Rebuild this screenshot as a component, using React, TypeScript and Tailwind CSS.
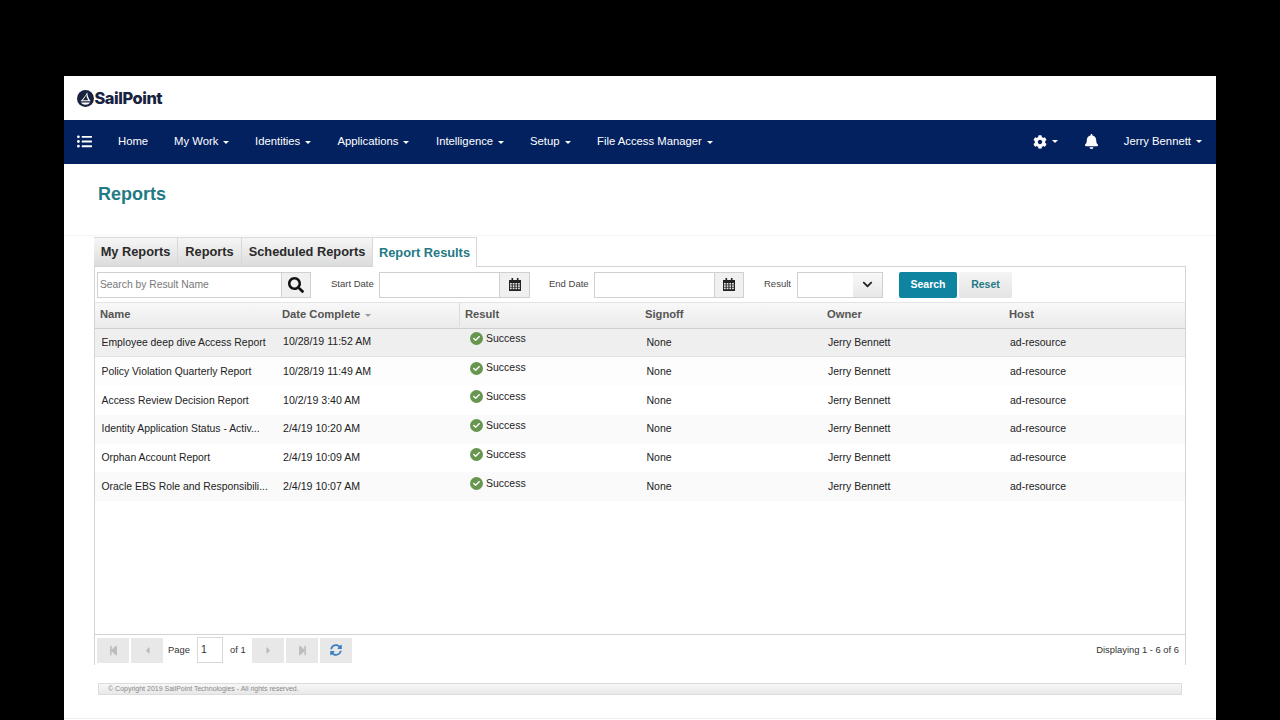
import React from 'react';
import { FaBell, FaCheck, FaChevronDown, FaCog, FaListUl, FaSearch, FaStepBackward, FaStepForward, FaCaretLeft, FaCaretRight, FaSyncAlt } from 'react-icons/fa';

const navItems = [
  { label: 'Home', w: 'w-[56px]', caret: false },
  { label: 'My Work', w: 'w-[81px]', caret: true },
  { label: 'Identities', w: 'w-[82.5px]', caret: true },
  { label: 'Applications', w: 'w-[98.5px]', caret: true },
  { label: 'Intelligence', w: 'w-[94px]', caret: true },
  { label: 'Setup', w: 'w-[67px]', caret: true },
  { label: 'File Access Manager', w: 'w-[130px]', caret: true },
];

const tabs = [
  { label: 'My Reports', w: 'w-[84px]' },
  { label: 'Reports', w: 'w-[64px]' },
  { label: 'Scheduled Reports', w: 'w-[131px]' },
];

const rows = [
  { name: 'Employee deep dive Access Report', date: '10/28/19 11:52 AM' },
  { name: 'Policy Violation Quarterly Report', date: '10/28/19 11:49 AM' },
  { name: 'Access Review Decision Report', date: '10/2/19 3:40 AM' },
  { name: 'Identity Application Status - Activ...', date: '2/4/19 10:20 AM' },
  { name: 'Orphan Account Report', date: '2/4/19 10:09 AM' },
  { name: 'Oracle EBS Role and Responsibili...', date: '2/4/19 10:07 AM' },
];

const Caret = ({ color = 'border-t-white' }: { color?: string }) => (
  <span className={`inline-block align-middle ml-[5px] w-0 h-0 border-x-[3.5px] border-x-transparent border-t-[3.5px] ${color}`} />
);

const PagerButton = ({ children }: { children: React.ReactNode }) => (
  <div className="w-[32px] h-[25px] bg-[#e8e8e8] flex items-center justify-center text-[#bdbdbd] text-[11px]">
    {children}
  </div>
);

const CalendarIcon = () => (
  <svg width="12" height="13" viewBox="0 0 12 13">
    <rect x="0" y="2" width="12" height="11" fill="#222" />
    <rect x="2.5" y="0" width="1.6" height="3" fill="#222" />
    <rect x="7.9" y="0" width="1.6" height="3" fill="#222" />
    {[5, 7.3, 9.6].map((y) =>
      [1, 3.7, 6.4, 9.1].map((x) => (
        <rect key={`${x}-${y}`} x={x} y={y} width="1.7" height="1.6" fill="#e8e8e8" />
      ))
    )}
  </svg>
);

export default function App() {
  return (
    <div className="w-[1280px] h-[720px] bg-black pt-[76px] px-[64px] overflow-hidden font-['Liberation_Sans',Arial,sans-serif]">
      <div className="h-[644px] bg-white flex flex-col">
        <div className="h-[44px] pl-[13px] flex items-center">
          <svg width="17" height="17" viewBox="0 0 17 17" className="mr-[0.5px]">
            <circle cx="8.5" cy="8.5" r="8.5" fill="#17233f" />
            <path d="M10.2 2.2 C10.6 6 11.6 9 13.8 11.2 H3.4 C6 9 8.4 6 10.2 2.2 Z" fill="white" />
            <path d="M9.4 4.6 C9.6 7 10.2 8.9 11.4 10.2 H5.8 C7.2 8.8 8.4 7 9.4 4.6 Z" fill="#17233f" />
            <path d="M4 12.6 H13 C12 14 10.4 14.8 8.5 14.8 C6.6 14.8 5 14 4 12.6 Z" fill="white" />
          </svg>
          <span className="font-['Inter',sans-serif] text-[16.4px] font-extrabold tracking-[-0.45px] text-[#17233f]">SailPoint</span>
        </div>

        <div className="h-[44px] pb-[1px] bg-[#04215f] flex items-center text-white text-[11.3px]">
          <FaListUl className="ml-[13px] mr-[26px] text-[15px]" />
          <div className="flex">
            {navItems.map((item) => (
              <div key={item.label} className={`${item.w} whitespace-nowrap shrink-0`}>
                {item.label}
                {item.caret && <Caret />}
              </div>
            ))}
          </div>
          <div className="ml-auto flex items-center">
            <FaCog className="text-[14px]" />
            <Caret />
            <FaBell className="ml-[26px] text-[15px]" />
            <span className="ml-[25px]">Jerry Bennett</span>
            <Caret />
            <span className="w-[14px]" />
          </div>
        </div>

        <div className="h-[72px] pl-[34px] pt-[19px] border-b border-[#f6f6f6]">
          <h1 className="text-[18px] leading-[22px] font-bold text-[#1f7a85]">Reports</h1>
        </div>

        <div className="ml-[30px] w-[1092px] mt-[1px] flex h-[29px] items-stretch">
          {tabs.map((tab) => (
            <div
              key={tab.label}
              className={`${tab.w} shrink-0 flex items-center justify-center bg-gradient-to-b from-[#f6f6f6] to-[#dcdcdc] border-t border-r border-[#d8d8d8] text-[12.8px] font-bold text-[#2a2a2a] whitespace-nowrap`}
            >
              {tab.label}
            </div>
          ))}
          <div className="w-[104px] shrink-0 flex items-center justify-center bg-white border-t border-r border-[#d8d8d8] text-[12.8px] font-bold text-[#1f7a85] relative z-10 h-[30px] whitespace-nowrap">
            Report Results
          </div>
        </div>

        <div className="ml-[30px] w-[1092px] h-[399px] border-x border-t border-[#d4d4d4] flex flex-col">
          <div className="h-[36px] flex items-center pl-[2px] text-[9.5px] text-[#444] border-b border-[#e4e4e4] shrink-0">
            <div className="w-[185px] h-[26px] border border-[#d0d0d0] flex items-center pl-[2px] text-[#777] text-[10.3px]">
              Search by Result Name
            </div>
            <div className="w-[29px] h-[26px] bg-[#f0f0f0] border-y border-r border-[#d0d0d0] flex items-center justify-center text-[#111] text-[16px]">
              <FaSearch />
            </div>
            <span className="ml-[20px] w-[48px]">Start Date</span>
            <div className="w-[121px] h-[26px] border border-[#d0d0d0]" />
            <div className="w-[30px] h-[26px] bg-[#f0f0f0] border-y border-r border-[#d0d0d0] flex items-center justify-center">
              <CalendarIcon />
            </div>
            <span className="ml-[19px] w-[45px]">End Date</span>
            <div className="w-[121px] h-[26px] border border-[#d0d0d0]" />
            <div className="w-[29px] h-[26px] bg-[#f0f0f0] border-y border-r border-[#d0d0d0] flex items-center justify-center">
              <CalendarIcon />
            </div>
            <span className="ml-[20px] w-[33px]">Result</span>
            <div className="w-[57px] h-[26px] border border-[#d0d0d0]" />
            <div className="w-[30px] h-[26px] bg-gradient-to-b from-[#f8f8f8] to-[#e8e8e8] border-y border-r border-[#d0d0d0] -ml-[1px] flex items-center justify-center text-[#222] text-[11px]">
              <FaChevronDown />
            </div>
            <div className="ml-[16px] w-[58px] h-[26px] rounded-[2px] bg-[#0f84a0] text-white font-bold text-[10.5px] flex items-center justify-center">
              Search
            </div>
            <div className="ml-[2px] w-[53px] h-[26px] rounded-[2px] bg-gradient-to-b from-[#f4f4f4] to-[#e4e4e4] text-[#1f7a85] font-bold text-[10.5px] flex items-center justify-center">
              Reset
            </div>
          </div>

          <div className="h-[26px] pb-[2px] grid grid-cols-[182px_182px_181px_182px_182px_1fr] items-center bg-gradient-to-b from-[#f8f8f8] to-[#ebebeb] border-b border-[#cfcfcf] text-[11.2px] font-bold text-[#555] shrink-0">
            <div className="pl-[5px]">Name</div>
            <div className="pl-[5px]">
              Date Complete
              <Caret color="border-t-[#999]" />
            </div>
            <div className="pl-[5px] h-[23px] flex items-center border-l border-[#dcdcdc]">Result</div>
            <div className="pl-[5px]">Signoff</div>
            <div className="pl-[5px]">Owner</div>
            <div className="pl-[5px]">Host</div>
          </div>

          <div className="flex-1 -mt-[0.5px]">
            {rows.map((row, i) => (
              <div
                key={row.name}
                className={`h-[28.8px] grid grid-cols-[182px_182px_181px_182px_182px_1fr] items-center text-[10.5px] text-[#222] ${
                  i === 0 ? 'bg-[#efefef] border-b border-[#e2e2e2]' : i === 1 ? 'bg-[#fdfdfd]' : i % 2 === 1 ? 'bg-[#fafafa]' : 'bg-white'
                }`}
              >
                <div className="pl-[6.5px] text-[10.4px] whitespace-nowrap overflow-hidden">{row.name}</div>
                <div className="pl-[6px] text-[10.6px]">{row.date}</div>
                <div className="pl-[11px] flex items-center gap-[3px] -mt-[7px]">
                  <span className="w-[13px] h-[13px] rounded-full bg-[#67964f] flex items-center justify-center text-white text-[7px]">
                    <FaCheck />
                  </span>
                  Success
                </div>
                <div className="pl-[6.5px]">None</div>
                <div className="pl-[6px]">Jerry Bennett</div>
                <div className="pl-[6px]">ad-resource</div>
              </div>
            ))}
          </div>

          <div className="h-[31px] border-t border-[#d4d4d4] flex items-center pl-[2px] pr-[6px] text-[9.4px] text-[#333] shrink-0">
            <PagerButton><FaStepBackward /></PagerButton>
            <span className="w-[2px]" />
            <PagerButton><FaCaretLeft /></PagerButton>
            <span className="ml-[5px] w-[22px]">Page</span>
            <div className="ml-[7px] w-[26px] h-[26px] border border-[#d8d8d8] flex items-center pl-[3px] text-[10.5px]">1</div>
            <span className="ml-[7px] w-[22px]">of 1</span>
            <PagerButton><FaCaretRight /></PagerButton>
            <span className="w-[2px]" />
            <PagerButton><FaStepForward /></PagerButton>
            <span className="w-[2px]" />
            <div className="w-[32px] h-[25px] bg-[#e8e8e8] flex items-center justify-center text-[#3a80c0] text-[12px]">
              <FaSyncAlt />
            </div>
            <span className="ml-auto">Displaying 1 - 6 of 6</span>
          </div>
        </div>

        <div className="ml-[34px] w-[1084px] h-[12px] mt-[18px] bg-gradient-to-b from-[#f7f7f7] to-[#e8e8e8] border border-[#dcdcdc] pl-[9px] flex items-center text-[7px] text-[#888]">
          © Copyright 2019 SailPoint Technologies - All rights reserved.
        </div>
        <div className="mt-[23px] border-t border-[#f0f0f0]" />
      </div>
    </div>
  );
}
